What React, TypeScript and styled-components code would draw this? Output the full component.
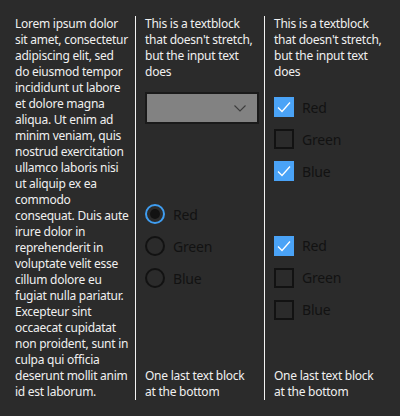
import React from "react";
import styled, { createGlobalStyle } from "styled-components";

const Global = createGlobalStyle`
  html, body { margin: 0; padding: 0; background: #2b2b2b; }
  body { font-family: "Segoe UI", "Noto Sans", "Open Sans", sans-serif; }
`;

const Page = styled.div`
  width: 400px;
  height: 416px;
  box-sizing: border-box;
  padding: 16px 0;
  display: grid;
  grid-template-columns: 136px 129px 1fr;
  background: #2b2b2b;
`;

const Column = styled.div<{ $first?: boolean; $last?: boolean }>`
  display: flex;
  flex-direction: column;
  box-sizing: border-box;
  padding: 0 ${(p) => (p.$last ? "16px" : p.$first ? "5px" : "9px")} 0
    ${(p) => (p.$first ? "15px" : "9px")};
  border-right: ${(p) => (p.$last ? "none" : "1px solid #f2f2f2")};
`;

const TextBlock = styled.p`
  margin: 0;
  color: #f0f0f0;
  font-size: 12px;
  line-height: 16px;
  letter-spacing: -0.25px;
`;

const Combo = styled.div`
  margin-top: 12px;
  margin-right: -4px;
  height: 32px;
  box-sizing: border-box;
  border: 2px solid #1a1a1a;
  background: #828282;
  display: flex;
  align-items: center;
  justify-content: flex-end;
  padding-right: 11px;
`;

const Middle = styled.div`
  flex: 1;
  display: flex;
  flex-direction: column;
  justify-content: center;
`;

const Group = styled.div<{ $gapTop?: number }>`
  display: flex;
  flex-direction: column;
  margin-top: ${(p) => p.$gapTop ?? 0}px;
`;

const OptionRow = styled.div`
  height: 32px;
  display: flex;
  align-items: center;
  gap: 8px;
  color: #121212;
  font-size: 14px;
  letter-spacing: -0.2px;
  white-space: nowrap;
`;

const RadioCircle = styled.span<{ $on?: boolean }>`
  flex: none;
  width: 20px;
  height: 20px;
  box-sizing: border-box;
  border-radius: 50%;
  border: 2px solid ${(p) => (p.$on ? "#3f9df0" : "#121212")};
  display: flex;
  align-items: center;
  justify-content: center;
  &::after {
    content: "";
    width: 10px;
    height: 10px;
    border-radius: 50%;
    background: ${(p) => (p.$on ? "#121212" : "transparent")};
  }
`;

const CheckBox = styled.span<{ $on?: boolean }>`
  flex: none;
  width: 20px;
  height: 20px;
  box-sizing: border-box;
  border: ${(p) => (p.$on ? "none" : "2px solid #121212")};
  background: ${(p) => (p.$on ? "#4aa3f7" : "transparent")};
  display: flex;
  align-items: center;
  justify-content: center;
`;

const Check = () => (
  <svg width="14" height="12" viewBox="0 0 14 12">
    <path d="M1 6.5 L5 10.5 L13 1.5" fill="none" stroke="#ffffff" strokeWidth="1.3" />
  </svg>
);

const Chevron = () => (
  <svg width="12" height="7" viewBox="0 0 12 7">
    <path d="M0.5 0.5 L6 6 L11.5 0.5" fill="none" stroke="#3c3c3c" strokeWidth="1.1" />
  </svg>
);

const Radio = ({ label, on }: { label: string; on?: boolean }) => (
  <OptionRow>
    <RadioCircle $on={on} />
    {label}
  </OptionRow>
);

const Checkbox = ({ label, on }: { label: string; on?: boolean }) => (
  <OptionRow>
    <CheckBox $on={on}>{on && <Check />}</CheckBox>
    {label}
  </OptionRow>
);

const lorem =
  "Lorem ipsum dolor sit amet, consectetur adipiscing elit, sed do eiusmod tempor incididunt ut labore et dolore magna aliqua. Ut enim ad minim veniam, quis nostrud exercitation ullamco laboris nisi ut aliquip ex ea commodo consequat. Duis aute irure dolor in reprehenderit in voluptate velit esse cillum dolore eu fugiat nulla pariatur. Excepteur sint occaecat cupidatat non proident, sunt in culpa qui officia deserunt mollit anim id est laborum.";

export default function App() {
  return (
    <>
      <Global />
      <Page>
        <Column $first>
          <TextBlock>{lorem}</TextBlock>
        </Column>
        <Column>
          <TextBlock>This is a textblock that doesn't stretch, but the input text does</TextBlock>
          <Combo>
            <Chevron />
          </Combo>
          <Middle>
            <Group>
              <Radio label="Red" on />
              <Radio label="Green" />
              <Radio label="Blue" />
            </Group>
          </Middle>
          <TextBlock>One last text block at the bottom</TextBlock>
        </Column>
        <Column $last>
          <TextBlock>This is a textblock that doesn't stretch, but the input text does</TextBlock>
          <Group $gapTop={11}>
            <Checkbox label="Red" on />
            <Checkbox label="Green" />
            <Checkbox label="Blue" on />
          </Group>
          <Middle>
            <Group>
              <Checkbox label="Red" on />
              <Checkbox label="Green" />
              <Checkbox label="Blue" />
            </Group>
          </Middle>
          <TextBlock>One last text block at the bottom</TextBlock>
        </Column>
      </Page>
    </>
  );
}
